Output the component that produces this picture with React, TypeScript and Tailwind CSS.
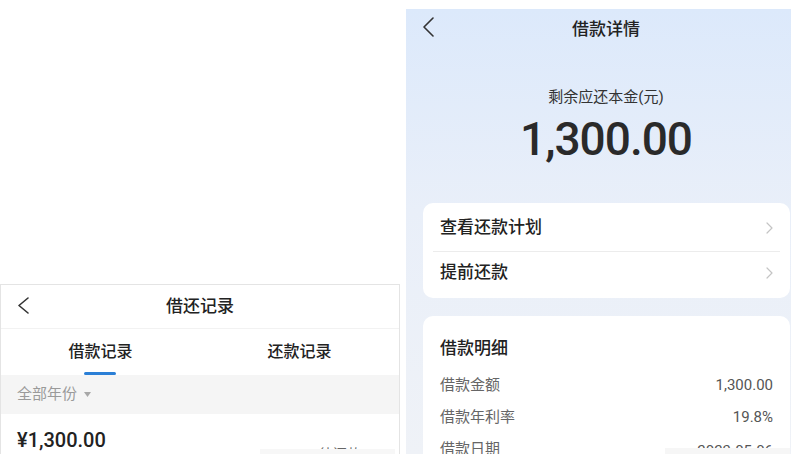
import React from "react";

const FONT = { fontFamily: '"Roboto", "Noto Sans CJK SC", sans-serif' };

function BackArrow({ w, h, color = "#333" }: { w: number; h: number; color?: string }) {
  return (
    <svg width={w} height={h} viewBox={`0 0 ${w} ${h}`} fill="none">
      <path
        d={`M${w - 1} 1 L1 ${h / 2} L${w - 1} ${h - 1}`}
        stroke={color}
        strokeWidth="1.6"
        strokeLinecap="round"
        strokeLinejoin="round"
      />
    </svg>
  );
}

function Chevron() {
  return (
    <svg width="7" height="12" viewBox="0 0 7 12" fill="none">
      <path d="M1 1 L6 6 L1 11" stroke="#c4c4c4" strokeWidth="1.2" strokeLinecap="round" strokeLinejoin="round" />
    </svg>
  );
}

function LeftScreen() {
  return (
    <div className="w-[400px] shrink-0 flex flex-col pt-[284px]">
      <div className="relative flex-1 border-t border-l border-r border-[#e4e4e4] bg-white overflow-hidden">
        <div className="relative h-[44px] flex items-center justify-center border-b border-[#f2f2f2]">
          <div className="absolute left-[17px] top-[12px]">
            <BackArrow w={11} h={17} />
          </div>
          <span className="text-[17px] text-[#222] font-medium">借还记录</span>
        </div>
        <div className="h-[46px] grid grid-cols-2">
          <div className="relative flex items-center justify-center">
            <span className="text-[16px] text-[#222] font-medium pb-[1px]">借款记录</span>
            <div className="absolute bottom-0 left-[83px] w-[32px] h-[3px] rounded-full bg-[#2b7fd6]" />
          </div>
          <div className="flex items-center justify-center">
            <span className="text-[16px] text-[#222] font-medium pb-[1px]">还款记录</span>
          </div>
        </div>
        <div className="h-[39px] bg-[#f5f5f5] flex items-center pl-[16px] gap-[7px]">
          <span className="text-[15px] text-[#9a9a9a]">全部年份</span>
          <svg width="7" height="5" viewBox="0 0 7 5">
            <path d="M0 0 L7 0 L3.5 5 Z" fill="#a8a8a8" />
          </svg>
        </div>
        <div className="relative pt-[12px] pl-[16px] flex">
          <span className="text-[20px] leading-[28px] font-medium text-[#222]">¥1,300.00</span>
          <span className="absolute left-[318px] top-[30px] text-[14px] text-[#666]">待还款</span>
          <div className="absolute left-[259px] top-[35px] w-[135px] h-[20px] bg-[#f7f7f7]" />
        </div>
      </div>
    </div>
  );
}

function RightScreen() {
  return (
    <div className="ml-[6px] mt-[9px] w-[400px] h-[445px] shrink-0 flex flex-col bg-gradient-to-b from-[#dce9fb] via-[#e9eff9] via-45% to-[#eff2f7]">
      <div className="relative h-[42px] flex items-center justify-center">
        <div className="absolute left-[17px] top-[8px]">
          <BackArrow w={11} h={20} />
        </div>
        <span className="text-[17px] text-[#222] font-medium">借款详情</span>
      </div>
      <div className="mt-[35px] text-center text-[15px] leading-[22px] text-[#333]">剩余应还本金(元)</div>
      <div className="mt-[8px] text-center text-[46px] leading-[46px] tracking-[-1px] font-medium text-[#2a2a2a]">
        1,300.00
      </div>
      <div className="mt-[41px] ml-[17px] mr-[16px] bg-white rounded-[10px] flex flex-col">
        <div className="h-[48px] pt-[2px] px-[17px] flex items-center justify-between">
          <span className="text-[17px] font-medium text-[#222]">查看还款计划</span>
          <Chevron />
        </div>
        <div className="mx-[10px] h-px bg-[#ececec]" />
        <div className="h-[46px] pb-[4px] px-[17px] flex items-center justify-between">
          <span className="text-[17px] font-medium text-[#222]">提前还款</span>
          <Chevron />
        </div>
      </div>
      <div className="relative mt-[18px] ml-[17px] mr-[16px] flex-1 bg-white rounded-t-[10px] pt-[20px] px-[17px] overflow-hidden">
        <div className="text-[17px] leading-[24px] font-medium text-[#222]">借款明细</div>
        <div className="mt-[9px] flex flex-col">
          <div className="h-[32px] flex items-center justify-between">
            <span className="text-[15px] text-[#666]">借款金额</span>
            <span className="text-[15px] text-[#555]">1,300.00</span>
          </div>
          <div className="h-[32px] flex items-center justify-between">
            <span className="text-[15px] text-[#666]">借款年利率</span>
            <span className="text-[15px] text-[#555]">19.8%</span>
          </div>
          <div className="h-[32px] flex items-center justify-between">
            <span className="text-[15px] text-[#666]">借款日期</span>
            <span className="text-[15px] text-[#555] pt-[4px]">2023-05-06</span>
          </div>
        </div>
        <div className="absolute left-[242px] top-[132px] w-[150px] h-[20px] bg-[#f6f6f6]" />
      </div>
    </div>
  );
}

export default function App() {
  return (
    <div className="w-[791px] h-[454px] overflow-hidden bg-white flex" style={FONT}>
      <LeftScreen />
      <RightScreen />
    </div>
  );
}
